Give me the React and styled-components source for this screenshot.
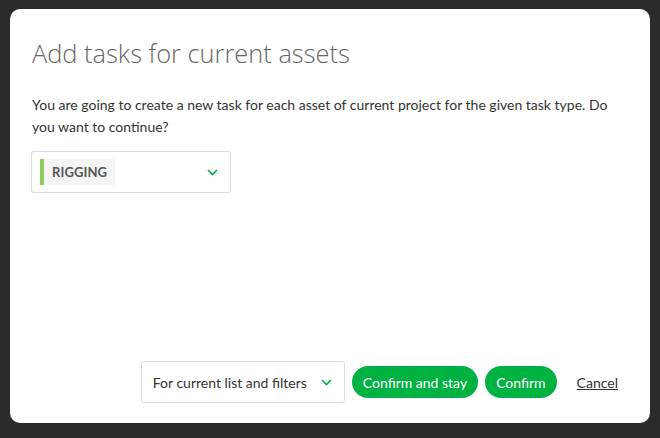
import React from 'react';
import styled, { createGlobalStyle } from 'styled-components';

const GlobalStyle = createGlobalStyle`
  html, body {
    margin: 0;
    padding: 0;
    background: #2b2b2b;
  }
  body {
    font-family: Lato, "Noto Sans", sans-serif;
  }
`;

const Backdrop = styled.div`
  width: 660px;
  height: 438px;
  box-sizing: border-box;
  padding: 9px 10px 15px 10px;
  background: #2b2b2b;
`;

const Modal = styled.div`
  height: 100%;
  box-sizing: border-box;
  background: #ffffff;
  border-radius: 10px;
  padding: 26px 22px 20px 22px;
  display: flex;
  flex-direction: column;
`;

const Title = styled.h1`
  margin: 0;
  font-family: "Open Sans", Lato, sans-serif;
  font-weight: 300;
  font-size: 25.4px;
  line-height: 36px;
  color: #666666;
`;

const Message = styled.p`
  margin: 23px 0 13px 0;
  font-size: 14px;
  line-height: 22px;
  color: #333333;
`;

const Combo = styled.div`
  display: flex;
  align-items: center;
  justify-content: space-between;
  box-sizing: border-box;
  width: ${p => p.width}px;
  height: 42px;
  margin-left: ${p => (p.tight ? '-1px' : '0')};
  padding: ${p => (p.tight ? '0 12px 0 8px' : '0 12px 0 11px')};
  border: 1px solid #dddddd;
  border-radius: 3px;
  background: #fff;
  cursor: pointer;
`;

const TaskType = styled.span`
  display: inline-flex;
  align-items: center;
  height: 26px;
  padding: 0 8px 0 8px;
  border-left: 4px solid #8dca5a;
  background: #f4f4f4;
  font-size: 13px;
  font-weight: 700;
  color: #555555;
  letter-spacing: 0.1px;
`;

const ComboLabel = styled.span`
  font-size: 14px;
  color: #333333;
`;

const Chevron = () => (
  <svg width="11" height="7" viewBox="0 0 11 7" fill="none">
    <path d="M1 1l4.5 4.5L10 1" stroke="#00b242" strokeWidth="1.6" />
  </svg>
);

const Spacer = styled.div`
  flex: 1;
`;

const Footer = styled.div`
  display: flex;
  align-items: center;
  justify-content: flex-end;
  gap: 7px;
  padding-right: 10px;
`;

const Button = styled.button`
  height: 32px;
  padding: 0 11px;
  border: none;
  border-radius: 16px;
  background: #00b242;
  color: #ffffff;
  font-family: Lato, "Noto Sans", sans-serif;
  font-size: 14px;
  cursor: pointer;
`;

const CancelLink = styled.a`
  margin-left: 13px;
  font-size: 14px;
  color: #333333;
  text-decoration: underline;
  cursor: pointer;
`;

export default function App() {
  return (
    <>
      <GlobalStyle />
      <Backdrop>
        <Modal>
          <Title>Add tasks for current assets</Title>
          <Message>
            You are going to create a new task for each asset of current project for the given task type. Do you want to continue?
          </Message>
          <Combo width={200} tight>
            <TaskType>RIGGING</TaskType>
            <Chevron />
          </Combo>
          <Spacer />
          <Footer>
            <Combo width={204}>
              <ComboLabel>For current list and filters</ComboLabel>
              <Chevron />
            </Combo>
            <Button>Confirm and stay</Button>
            <Button>Confirm</Button>
            <CancelLink>Cancel</CancelLink>
          </Footer>
        </Modal>
      </Backdrop>
    </>
  );
}
